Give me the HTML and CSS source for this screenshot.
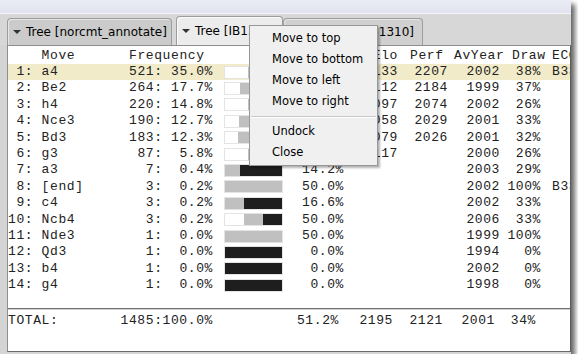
FILE: index.html
```html
<!DOCTYPE html>
<html lang="en">
<head>
    <meta charset="UTF-8">
    <title>Opening Tree</title>
    <link rel="stylesheet" href="styles.css">
</head>
<body>
<div class="shot">
    <div class="titlebar"></div>
    <div class="tabbar">
        <div class="tab tab-first"><span class="arrow"></span>Tree [norcmt_annotate]</div>
        <div class="tab tab-active"><span class="arrow"></span>Tree [IB13]</div>
        <div class="tab tab-last"><span class="arrow"></span>Tree [IB_B31310]</div>
    </div>
    <div class="content">
        <div class="panel">
            <div class="row head">
                <span></span><span>Move</span><span>Frequency</span><span></span>
                <span class="r">Score</span><span class="r">Elo</span>
                <span class="h-perf">Perf</span><span class="h-year">AvYear</span>
                <span class="h-draw">Draw</span><span class="eco">ECO</span>
            </div>
            <div class="row hl">
                <span> 1:</span><span>a4</span><span>521: 35.0%</span>
                <span class="graph"><i class="w" style="width:40%"></i><i class="d" style="width:38%"></i><i class="l" style="width:22%"></i></span>
                <span class="r">58.8%</span><span class="r">2133</span><span class="r">2207</span><span class="r">2002</span><span class="r">38%</span><span class="eco">B33</span>
            </div>
            <div class="row">
                <span> 2:</span><span>Be2</span><span>264: 17.7%</span>
                <span class="graph"><i class="w" style="width:27%"></i><i class="d" style="width:37%"></i><i class="l" style="width:36%"></i></span>
                <span class="r">45.5%</span><span class="r">2112</span><span class="r">2184</span><span class="r">1999</span><span class="r">37%</span><span class="eco"></span>
            </div>
            <div class="row">
                <span> 3:</span><span>h4</span><span>220: 14.8%</span>
                <span class="graph"><i class="w" style="width:40%"></i><i class="d" style="width:26%"></i><i class="l" style="width:34%"></i></span>
                <span class="r">53.0%</span><span class="r">2097</span><span class="r">2074</span><span class="r">2002</span><span class="r">26%</span><span class="eco"></span>
            </div>
            <div class="row">
                <span> 4:</span><span>Nce3</span><span>190: 12.7%</span>
                <span class="graph"><i class="w" style="width:25%"></i><i class="d" style="width:33%"></i><i class="l" style="width:42%"></i></span>
                <span class="r">41.5%</span><span class="r">2058</span><span class="r">2029</span><span class="r">2001</span><span class="r">33%</span><span class="eco"></span>
            </div>
            <div class="row">
                <span> 5:</span><span>Bd3</span><span>183: 12.3%</span>
                <span class="graph"><i class="w" style="width:23%"></i><i class="d" style="width:32%"></i><i class="l" style="width:45%"></i></span>
                <span class="r">39.0%</span><span class="r">2079</span><span class="r">2026</span><span class="r">2001</span><span class="r">32%</span><span class="eco"></span>
            </div>
            <div class="row">
                <span> 6:</span><span>g3</span><span> 87:  5.8%</span>
                <span class="graph"><i class="w" style="width:40%"></i><i class="d" style="width:26%"></i><i class="l" style="width:34%"></i></span>
                <span class="r">53.0%</span><span class="r">2117</span><span class="r"></span><span class="r">2000</span><span class="r">26%</span><span class="eco"></span>
            </div>
            <div class="row">
                <span> 7:</span><span>a3</span><span>  7:  0.4%</span>
                <span class="graph"><i class="d" style="width:27%"></i><i class="l" style="width:73%"></i></span>
                <span class="r">14.2%</span><span class="r"></span><span class="r"></span><span class="r">2003</span><span class="r">29%</span><span class="eco"></span>
            </div>
            <div class="row">
                <span> 8:</span><span>[end]</span><span>  3:  0.2%</span>
                <span class="graph"><i class="d" style="width:100%"></i></span>
                <span class="r">50.0%</span><span class="r"></span><span class="r"></span><span class="r">2002</span><span class="r">100%</span><span class="eco">B33</span>
            </div>
            <div class="row">
                <span> 9:</span><span>c4</span><span>  3:  0.2%</span>
                <span class="graph"><i class="d" style="width:33%"></i><i class="l" style="width:67%"></i></span>
                <span class="r">16.6%</span><span class="r"></span><span class="r"></span><span class="r">2002</span><span class="r">33%</span><span class="eco"></span>
            </div>
            <div class="row">
                <span>10:</span><span>Ncb4</span><span>  3:  0.2%</span>
                <span class="graph"><i class="w" style="width:33.3%"></i><i class="d" style="width:33.3%"></i><i class="l" style="width:33.4%"></i></span>
                <span class="r">50.0%</span><span class="r"></span><span class="r"></span><span class="r">2006</span><span class="r">33%</span><span class="eco"></span>
            </div>
            <div class="row">
                <span>11:</span><span>Nde3</span><span>  1:  0.0%</span>
                <span class="graph"><i class="d" style="width:100%"></i></span>
                <span class="r">50.0%</span><span class="r"></span><span class="r"></span><span class="r">1999</span><span class="r">100%</span><span class="eco"></span>
            </div>
            <div class="row">
                <span>12:</span><span>Qd3</span><span>  1:  0.0%</span>
                <span class="graph"><i class="l" style="width:100%"></i></span>
                <span class="r">0.0%</span><span class="r"></span><span class="r"></span><span class="r">1994</span><span class="r">0%</span><span class="eco"></span>
            </div>
            <div class="row">
                <span>13:</span><span>b4</span><span>  1:  0.0%</span>
                <span class="graph"><i class="l" style="width:100%"></i></span>
                <span class="r">0.0%</span><span class="r"></span><span class="r"></span><span class="r">2002</span><span class="r">0%</span><span class="eco"></span>
            </div>
            <div class="row">
                <span>14:</span><span>g4</span><span>  1:  0.0%</span>
                <span class="graph"><i class="l" style="width:100%"></i></span>
                <span class="r">0.0%</span><span class="r"></span><span class="r"></span><span class="r">1998</span><span class="r">0%</span><span class="eco"></span>
            </div>

            <div class="sep"></div>
            <div class="row total">
                <span class="t-label">TOTAL:</span><span class="t-freq">1485:100.0%</span><span></span>
                <span class="r">51.2%</span><span class="r">2195</span><span class="r">2121</span><span class="r">2001</span><span class="r">34%</span><span class="eco"></span>
            </div>
        </div>
    </div>

    <div class="menu">
        <div class="item">Move to top</div>
        <div class="item">Move to bottom</div>
        <div class="item">Move to left</div>
        <div class="item">Move to right</div>
        <div class="menu-sep"></div>
        <div class="item">Undock</div>
        <div class="item">Close</div>
    </div>
</div>
</body>
</html>
```

FILE: styles.css
```css
body { margin: 0; background: #fff; font-family: "DejaVu Sans", sans-serif; }

.shot {
    position: relative;
    width: 571px;
    height: 354px;
    background: #d4d4d4;
    box-shadow: 4px 4px 5px rgba(0, 0, 0, 0.6);
    overflow: hidden;
}
.titlebar {
    height: 13px;
    background: linear-gradient(#eaebf5, #e1e3ef);
    border-bottom: 1px solid #f5f5f9;
}

/* tabs */
.tabbar {
    height: 31px;
    display: flex;
    align-items: flex-end;
    padding-left: 7px;
    background: #d7d7d7;
}
.tab {
    box-sizing: border-box;
    height: 27px;
    display: flex;
    align-items: center;
    padding-left: 5px;
    border: 1px solid #9c9c9c;
    border-bottom: none;
    border-radius: 4px 4px 0 0;
    background: #cbcbcb;
    box-shadow: inset 1px 1px 0 #e6e6e6;
    font-size: 12px;
    color: #000;
    white-space: nowrap;
    overflow: hidden;
}
.tab-first { width: 165px; margin-right: 4px; }
.tab-active { width: 107px; height: 29px; background: #ececec; box-shadow: inset 1px 1px 0 #fafafa; }
.tab-last { width: 140px; background: #d0d0d0; justify-content: flex-end; padding-right: 8px; }
.arrow {
    width: 0;
    height: 0;
    border-left: 4px solid transparent;
    border-right: 4px solid transparent;
    border-top: 4px solid #333;
    margin-right: 5px;
}

/* table panel */
.content {
    height: 309px;
    padding-left: 7px;
    display: flex;
}
.panel {
    flex: 1;
    height: 307px;
    box-sizing: border-box;
    background: #fff;
    border: 1px solid #8e8e8e;
    border-right-color: #5c5c5c;
    border-bottom-color: #6a6a6a;
    padding-top: 2px;
    overflow: hidden;
    font-family: "Liberation Mono", "Courier New", monospace;
    font-size: 13px;
    letter-spacing: 0.6px;
    color: #222;
}
.row {
    display: grid;
    grid-template-columns: 33.6px 87.4px 84px 70px 61px 54px 50px 52px 41px 1fr;
    height: 16.4px;
    line-height: 16.4px;
    white-space: pre;
}
.row.head { height: 16px; line-height: 16px; }
.row.hl { background: #f1ebc9; }
.r { text-align: right; }
.eco { padding-left: 11px; }
.h-perf { padding-left: 12px; }
.h-year { padding-left: 6px; }
.h-draw { padding-left: 12px; }

.graph {
    align-self: center;
    box-sizing: border-box;
    width: 59px;
    height: 13px;
    margin-left: 11px;
    border: 1px solid #e4e4e4;
    display: flex;
}
.graph i { display: block; height: 100%; }
.graph .w { background: #fff; }
.graph .d { background: #c0c0c0; }
.graph .l { background: #1e1e1e; }

.sep {
    margin-top: 15px;
    border-top: 1px solid #707070;
    border-bottom: 1px solid #d0d0d0;
}
.row.total {
    margin-top: 3px;
    grid-template-columns: 33.6px 87.4px 84px 65px 61px 54px 50px 52px 41px 1fr;
}
.t-label { grid-column: 1 / 2; }
.t-freq { grid-column: 2 / 4; text-align: right; }

/* context menu */
.menu {
    position: absolute;
    left: 249px;
    top: 25px;
    width: 129px;
    box-sizing: border-box;
    padding: 2px 0;
    background: #f0f0f0;
    border: 1px solid #979797;
    box-shadow: 2px 2px 2px rgba(0, 0, 0, 0.3);
    font-size: 11.5px;
    color: #000;
}
.item {
    height: 21px;
    line-height: 21px;
    padding-left: 22px;
}
.menu-sep {
    margin: 4px 1px 3px;
    border-top: 1px solid #c8c8c8;
    border-bottom: 1px solid #fff;
}
```
